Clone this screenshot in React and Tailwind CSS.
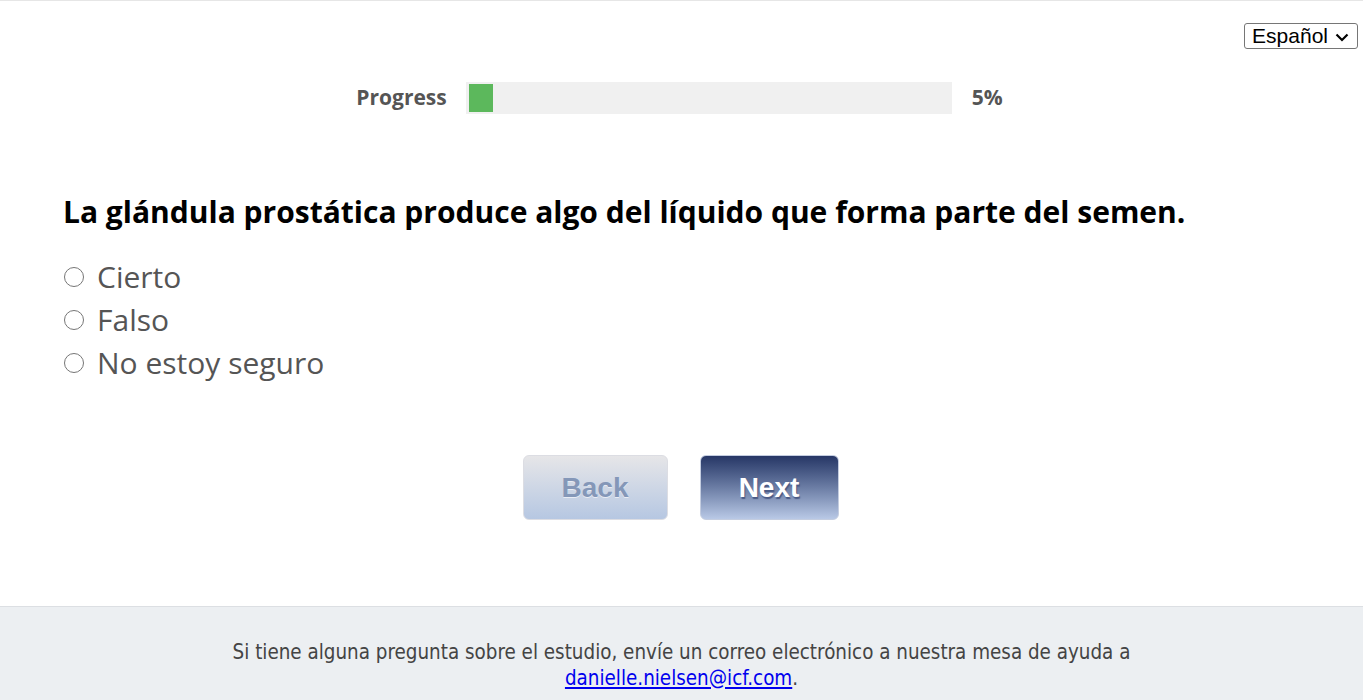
export default function App() {
  return (
    <div className="min-h-[700px] flex flex-col bg-white border-t border-[#e6e6e6]" style={{ fontFamily: '"Open Sans", sans-serif' }}>
      <div className="flex-1 flex flex-col">
        <div className="flex justify-end pt-[22px] pr-[5px]">
          <div className="flex items-center gap-[7px] h-[26px] pl-[7px] pr-[8px] border border-[#767676] rounded-[3px] text-[21px] text-black" style={{ fontFamily: '"Liberation Sans", Arial, sans-serif' }}>
            <span>Español</span>
            <svg width="14" height="9" viewBox="0 0 14 9" className="mt-[2px]"><path d="M1.5 1.5 L7 7 L12.5 1.5" fill="none" stroke="#000" strokeWidth="2.2" /></svg>
          </div>
        </div>
        <div className="flex items-center justify-center mt-[33px] gap-[19px] pr-[4px]">
          <span className="text-[21px] font-bold text-[#555]">Progress</span>
          <div className="w-[486px] h-[32px] bg-[#f0f0f0] p-[2px] pl-[3px]">
            <div className="h-full w-[24px] bg-[#5cb85c]" />
          </div>
          <span className="text-[21px] font-bold text-[#555] ml-[1px]">5%</span>
        </div>
        <div className="pl-[63px] mt-[78px]">
          <h1 className="text-[30px] font-bold text-black leading-[40px]">La glándula prostática produce algo del líquido que forma parte del semen.</h1>
          <div className="mt-[23px] flex flex-col">
            {["Cierto", "Falso", "No estoy seguro"].map((o) => (
              <label key={o} className="flex items-center h-[43px] text-[30px] text-[#555]">
                <span className="w-[20px] h-[20px] rounded-full border-[1.5px] border-[#767676] ml-[1px] mr-[13px] bg-white" />
                <span>{o}</span>
              </label>
            ))}
          </div>
        </div>
        <div className="flex justify-center gap-[32px] mt-[71px] pr-[2px]" style={{ fontFamily: '"Liberation Sans", Arial, sans-serif' }}>
          <button className="w-[145px] h-[65px] rounded-[6px] border border-[#dcdde3] bg-gradient-to-b from-[#e6e6e8] to-[#b6c7e2] text-[28px] font-bold text-[#8497b8]" style={{ textShadow: '0 1px 0 #e8ecf4' }}>Back</button>
          <button className="w-[139px] h-[65px] rounded-[6px] border border-[#c4cde0] bg-gradient-to-b from-[#273766] to-[#b9c9e6] text-[28px] font-bold text-white" style={{ textShadow: '1px 2px 1px #4a5a85' }}>Next</button>
        </div>
      </div>
      <footer className="h-[94px] bg-[#eceff2] border-t border-[#dcdfe3] flex flex-col items-center justify-center pt-[22px] text-[20.4px] leading-[26px] text-[#444]" style={{ fontFamily: '"DejaVu Sans Condensed", "DejaVu Sans", sans-serif' }}>
        <p>Si tiene alguna pregunta sobre el estudio, envíe un correo electrónico a nuestra mesa de ayuda a</p>
        <p><a href="#" className="text-[#0000ee] underline">danielle.nielsen@icf.com</a>.</p>
      </footer>
    </div>
  );
}
